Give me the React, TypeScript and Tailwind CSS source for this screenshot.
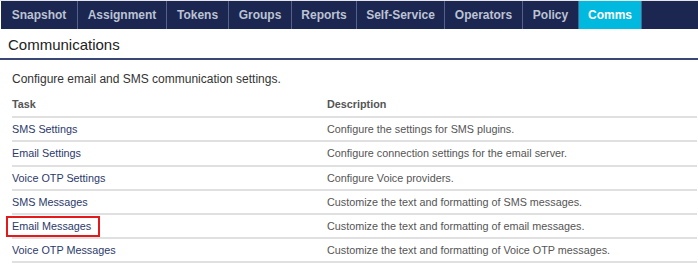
import React from "react";

const tabs: [string, string][] = [
  ["Snapshot", "w-[77px]"],
  ["Assignment", "w-[89px]"],
  ["Tokens", "w-[62px]"],
  ["Groups", "w-[63px]"],
  ["Reports", "w-[65px]"],
  ["Self-Service", "w-[88px]"],
  ["Operators", "w-[78px]"],
  ["Policy", "w-[56px]"],
  ["Comms", "w-[63px]"],
];

const rows: [string, string, string][] = [
  ["SMS Settings", "Configure the settings for SMS plugins.", "h-[24px]"],
  ["Email Settings", "Configure connection settings for the email server.", "h-[25px]"],
  ["Voice OTP Settings", "Configure Voice providers.", "h-[24px]"],
  ["SMS Messages", "Customize the text and formatting of SMS messages.", "h-[24px]"],
  ["Email Messages", "Customize the text and formatting of email messages.", "h-[24px]"],
  ["Voice OTP Messages", "Customize the text and formatting of Voice OTP messages.", "h-[24px]"],
];

export default function App() {
  return (
    <div className="w-[698px] h-[264px] bg-white overflow-hidden" style={{ fontFamily: '"Liberation Sans", Arial, sans-serif' }}>
      <div className="border-t border-[#e6e6e6] pl-[1px]">
        <div className="flex h-[28px] bg-[#1b2651]">
          {tabs.map(([t, w]) => (
            <div
              key={t}
              className={
                "flex items-center justify-center border-r border-[#56608a] text-[12px] font-bold " +
                w +
                " " +
                (t === "Comms" ? "bg-[#00b9de] text-white" : "text-[#bcc3d3]")
              }
            >
              {t}
            </div>
          ))}
        </div>
      </div>
      <div className="h-[31px] border-b-2 border-[#3a4775] pl-[8px] pt-[6px] text-[15px] leading-[20px] text-[#222]">
        Communications
      </div>
      <p className="mt-[11px] pl-[12px] text-[12px] leading-[16px] text-[#333]">
        Configure email and SMS communication settings.
      </p>
      <div className="mt-[5px] ml-[12px] mr-px">
        <div className="flex h-[26px] items-center border-b-2 border-[#e0e0e0] text-[10.8px] font-bold text-[#555]">
          <div className="w-[315px]">Task</div>
          <div>Description</div>
        </div>
        {rows.map(([task, desc, h]) => (
          <div key={task} className={"flex items-center border-b-2 border-[#e0e0e0] text-[10.8px] " + h}>
            <div className="w-[315px] text-[#2c3a6b]">
              {task === "Email Messages" ? (
                <span className="relative">
                  {task}
                  <span className="absolute left-[-6px] right-[-9px] top-[-4px] bottom-[-5px] border-2 border-[#e3191c]" />
                </span>
              ) : (
                task
              )}
            </div>
            <div className="text-[#555]">{desc}</div>
          </div>
        ))}
      </div>
    </div>
  );
}
